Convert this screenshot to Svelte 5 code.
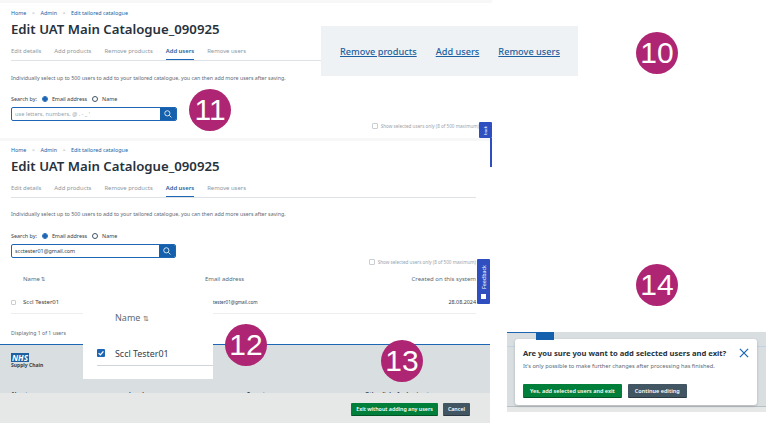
<script lang="ts">
	const tabs = ['Edit details', 'Add products', 'Remove products', 'Add users', 'Remove users'];
	const crumbs = ['Home', 'Admin', 'Edit tailored catalogue'];
	const badges = [
		{ n: 10, x: 657, y: 53 },
		{ n: 11, x: 210, y: 110 },
		{ n: 12, x: 246, y: 345 },
		{ n: 13, x: 402, y: 361 },
		{ n: 14, x: 657, y: 285 }
	];
</script>

{#snippet header()}
	<nav class="crumbs">
		{#each crumbs as c, i}
			{#if i > 0}<span class="sep">&gt;</span>{/if}
			<span>{c}</span>
		{/each}
	</nav>
	<h1>Edit UAT Main Catalogue_090925</h1>
	<div class="tabs">
		{#each tabs as t}
			<span class="tab" class:active={t === 'Add users'}>{t}</span>
		{/each}
	</div>
	<p class="intro">
		Individually select up to 500 users to add to your tailored catalogue, you can then add more users after saving.
	</p>
{/snippet}

{#snippet search(value, placeholder)}
	<div class="search-by">
		<span>Search by:</span>
		<span class="radio on"></span><span>Email address</span>
		<span class="radio"></span><span>Name</span>
	</div>
	<div class="search">
		<span class="field" class:placeholder>{value}</span>
		<span class="go">
			<svg width="8" height="8" viewBox="0 0 12 12" fill="none" stroke="#fff" stroke-width="1.2">
				<circle cx="5" cy="5" r="3.9" />
				<path d="M8 8l3.2 3.2" />
			</svg>
		</span>
	</div>
{/snippet}

{#snippet show()}
	<label class="show">
		<span class="box"></span>
		<span>Show selected users only (8 of 500 maximum)</span>
	</label>
{/snippet}

<main class="canvas">
	<section class="shot first">
		{@render header()}
		<div class="search-wrap">{@render search('use letters, numbers, @ . - _ \'', true)}</div>
		<div class="show-row">{@render show()}</div>
		<div class="feedback stub"><span>back</span></div>
	</section>

	<section class="shot second">
		{@render header()}
		<div class="search-wrap">{@render search('scctester01@gmail.com', false)}</div>
		<div class="show-row">{@render show()}</div>
		<div class="table">
			<div class="thead">
				<span class="c-name">Name <b>⇅</b></span>
				<span class="c-mail">Email address</span>
				<span class="c-date">Created on this system</span>
			</div>
			<div class="trow">
				<span class="box small"></span>
				<span class="c-name">Sccl Tester01</span>
				<span class="c-mail">tester01@gmail.com</span>
				<span class="c-date">28.08.2024</span>
			</div>
		</div>
		<p class="count">Displaying 1 of 1 users</p>
		<div class="feedback">
			<span>Feedback</span>
			<i></i>
		</div>
		<footer class="foot">
			<div class="logo">
				<span class="nhs">NHS</span>
				<span>Supply Chain</span>
			</div>
			<div class="links">
				<span>About</span><span>Legal</span><span>Export</span><span>Other links for buying teams</span>
			</div>
		</footer>
		<div class="actions">
			<button class="btn green">Exit without adding any users</button>
			<button class="btn slate">Cancel</button>
		</div>
	</section>

	<section class="tab-crop">
		<span>Remove products</span>
		<span>Add users</span>
		<span>Remove users</span>
	</section>

	<section class="row-crop">
		<div class="big-name">Name <b>⇅</b></div>
		<div class="big-row">
			<span class="checked">
				<svg width="8" height="8" viewBox="0 0 10 10" fill="none" stroke="#fff" stroke-width="1.6">
					<path d="M2 5.2l2.2 2.2L8 3" />
				</svg>
			</span>
			<span>Sccl Tester01</span>
		</div>
	</section>

	<section class="modal-crop">
		<div class="crop-top">
			<span class="crop-btn"></span>
		</div>
		<div class="modal">
			<div class="modal-head">
				<h2>Are you sure you want to add selected users and exit?</h2>
				<svg width="10" height="10" viewBox="0 0 11 11" stroke="#1d66b5" stroke-width="1.4">
					<path d="M1 1l9 9M10 1l-9 9" />
				</svg>
			</div>
			<p>It's only possible to make further changes after processing has finished.</p>
			<div class="modal-actions">
				<button class="btn green">Yes, add selected users and exit</button>
				<button class="btn slate">Continue editing</button>
			</div>
		</div>
	</section>

	{#each badges as b}
		<span class="badge" style="left: {b.x - 21}px; top: {b.y - 21}px">{b.n}</span>
	{/each}
</main>

<style>
	:global(body) {
		background: #fff;
	}
	.canvas {
		position: relative;
		width: 771px;
		height: 439px;
		overflow: hidden;
		font-family: 'Noto Sans', sans-serif;
		color: #425563;
	}
	.shot {
		position: absolute;
		left: 0;
		width: 492px;
		box-sizing: border-box;
		padding: 6px 0 0 11px;
	}
	.first {
		top: 3px;
		height: 135px;
		padding-top: 6px;
		box-shadow: 0 -3px 0 #f7f7f7;
	}
	.second {
		top: 141px;
		width: 490px;
		height: 282px;
		padding-top: 5px;
		box-shadow: 0 -3px 0 #f7f7f7;
	}
	.crumbs {
		display: flex;
		gap: 5px;
		height: 7px;
		margin-top: 1px;
		font-size: 5.4px;
		line-height: 7px;
		color: #1d5f9f;
	}
	.sep {
		margin: 0 0.5px;
		color: #98a4ae;
	}
	h1 {
		margin: 2px 0 0;
		font-size: 13.2px;
		line-height: 20px;
		font-weight: 600;
		color: #27323c;
	}
	.tabs {
		display: flex;
		gap: 13px;
		height: 21px;
		margin-top: 1px;
		width: 465px;
		border-bottom: 1px solid #dfe3e6;
		box-sizing: border-box;
	}
	.first .tabs {
		width: 310px;
	}
	.tab {
		font-size: 5.9px;
		line-height: 22px;
		color: #8d98a2;
	}
	.tab.active {
		height: 100%;
		box-sizing: border-box;
		color: #1d5f9f;
		font-weight: 600;
		border-bottom: 1px solid #1d66b5;
	}
	.intro {
		margin: 12px 0 0;
		font-size: 5.3px;
		line-height: 8px;
		white-space: nowrap;
		color: #5d6a75;
	}
	.first .intro {
		margin-top: 13px;
	}
	.search-wrap {
		margin-top: 13px;
	}
	.second .search-wrap {
		margin-top: 14px;
	}
	.search-by {
		display: flex;
		align-items: center;
		gap: 4px;
		height: 8px;
		font-size: 5.4px;
		color: #33404b;
	}
	.radio {
		width: 6px;
		height: 6px;
		border: 1px solid #425563;
		border-radius: 50%;
		box-sizing: border-box;
		margin-left: 1px;
	}
	.radio.on {
		border-color: #1d66b5;
		background: radial-gradient(circle, #1d66b5 0 2px, #fff 2.2px);
	}
	.search {
		display: flex;
		width: 166px;
		height: 14px;
		margin-top: 4px;
		box-sizing: border-box;
		border: 1px solid #1d66b5;
		border-radius: 2px;
		overflow: hidden;
	}
	.second .search {
		width: 165px;
	}
	.field {
		flex: 1;
		padding-left: 3px;
		font-size: 5.4px;
		line-height: 12px;
		color: #33404b;
	}
	.field.placeholder {
		font-size: 5.6px;
		color: #98a4ae;
	}
	.go {
		display: flex;
		align-items: center;
		justify-content: center;
		width: 16px;
		background: #1560ad;
	}
	.show-row {
		display: flex;
		justify-content: flex-end;
		width: 468px;
		margin-top: 2px;
	}
	.second .show-row {
		width: 465px;
		margin-top: 1px;
	}
	.show {
		display: flex;
		align-items: center;
		gap: 3px;
		font-size: 4.6px;
		color: #98a4ae;
		white-space: nowrap;
	}
	.box {
		width: 6px;
		height: 6px;
		border: 1px solid #c8ced3;
		border-radius: 1px;
		box-sizing: border-box;
	}
	.box.small {
		width: 5px;
		height: 5px;
	}
	.table {
		width: 465px;
		margin-top: 2px;
		font-size: 6px;
	}
	.thead,
	.trow {
		display: grid;
		grid-template-columns: 12px 182px 1fr auto;
		align-items: center;
	}
	.thead {
		height: 24px;
		color: #5d6a75;
	}
	.thead .c-name {
		grid-column: 2;
	}
	.thead .c-mail {
		grid-column: 3;
	}
	.c-date {
		grid-column: 4;
		text-align: right;
	}
	.thead b {
		font-weight: 400;
		font-size: 5px;
	}
	.trow {
		height: 22px;
		border-bottom: 1px solid #eceeef;
		color: #33404b;
		font-size: 6px;
	}
	.trow .c-mail {
		padding-left: 8px;
		font-size: 4.6px;
	}
	.trow .c-date {
		font-size: 5.4px;
	}
	.count {
		margin: 15px 0 0;
		font-size: 5.2px;
		line-height: 8px;
		color: #5d6a75;
	}
	.feedback {
		position: absolute;
		right: 0;
		top: 118px;
		width: 13px;
		height: 45px;
		display: flex;
		flex-direction: column;
		align-items: center;
		justify-content: center;
		gap: 5px;
		border-radius: 1px;
		background: #2f4fc0;
		color: #fff;
		font-size: 5.4px;
	}
	.feedback span {
		writing-mode: vertical-rl;
		transform: rotate(180deg);
	}
	.feedback i {
		width: 5px;
		height: 5px;
		background: #fff;
	}
	.stub {
		top: 119px;
		height: 16px;
	}
	.stub::after {
		content: '';
		position: absolute;
		right: 0;
		top: 16px;
		width: 2px;
		height: 29px;
		background: #2f4fc0;
	}
	.stub span {
		font-size: 4px;
	}
	.foot {
		position: absolute;
		left: 0;
		right: 0;
		top: 203px;
		height: 49px;
		box-sizing: border-box;
		padding: 8px 11px 0;
		border-top: 1px solid #1d66b5;
		background: #d9dee0;
		overflow: hidden;
	}
	.logo {
		display: flex;
		flex-direction: column;
		align-items: flex-start;
		font-size: 5px;
		font-weight: 700;
		line-height: 7px;
		color: #33404b;
	}
	.nhs {
		padding: 0 1px;
		font-size: 8px;
		font-weight: 700;
		font-style: italic;
		line-height: 9px;
		background: #1d5f9f;
		color: #fff;
	}
	.links {
		display: grid;
		grid-template-columns: 118px 118px 118px 1fr;
		margin-top: 21px;
		font-size: 5.5px;
		font-weight: 700;
		color: #33404b;
	}
	.actions {
		position: absolute;
		left: 0;
		right: 0;
		top: 252px;
		height: 30px;
		box-sizing: border-box;
		padding: 10px 20px 0 0;
		display: flex;
		justify-content: flex-end;
		gap: 5px;
		background: #e6e7e7;
	}
	.btn {
		height: 13px;
		padding: 0 5px;
		border: 0;
		border-bottom: 1px solid #00000055;
		border-radius: 1px;
		color: #fff;
		font: 600 5.3px 'Noto Sans', sans-serif;
		white-space: nowrap;
	}
	.green {
		background: #007f3b;
	}
	.slate {
		background: #425563;
	}
	.tab-crop {
		position: absolute;
		left: 321px;
		top: 26px;
		width: 257px;
		height: 50px;
		box-sizing: border-box;
		padding-left: 19px;
		display: flex;
		align-items: center;
		gap: 19px;
		background: #eef2f4;
		font-size: 9.2px;
		font-weight: 500;
		color: #1d5f9f;
		text-decoration: underline;
	}
	.row-crop {
		position: absolute;
		left: 83px;
		top: 311px;
		width: 130px;
		height: 68px;
		box-sizing: border-box;
		padding-left: 14px;
		background: #fff;
	}
	.big-name {
		padding-left: 18px;
		height: 14px;
		line-height: 14px;
		font-size: 9px;
		color: #5d6a75;
	}
	.big-name b {
		font-weight: 400;
		font-size: 7px;
	}
	.big-row {
		display: flex;
		align-items: center;
		gap: 10px;
		height: 41px;
		box-sizing: border-box;
		padding-top: 16px;
		border-bottom: 1px solid #cfd5d9;
		font-size: 8.9px;
		color: #33404b;
	}
	.checked {
		display: flex;
		align-items: center;
		justify-content: center;
		width: 8px;
		height: 8px;
		border-radius: 1px;
		background: #1d66b5;
	}
	.modal-crop {
		position: absolute;
		left: 507px;
		top: 332px;
		width: 259px;
		height: 80px;
		box-sizing: border-box;
		padding: 0 9px 0 8px;
		background:
			linear-gradient(transparent 14px, #c3d3e3 14px 15px, transparent 15px),
			linear-gradient(#d9dee0 0 74px, #b9c0c5 74px 75px, #e6e7e7 75px);
	}
	.crop-top {
		position: relative;
		width: 29px;
		height: 7px;
		margin-left: -8px;
		box-sizing: border-box;
		border-top: 1px solid #1d66b5;
	}
	.crop-btn {
		position: absolute;
		left: 29px;
		top: -1px;
		width: 18px;
		height: 8px;
		background: #1560ad;
	}
	.modal {
		height: 66px;
		box-sizing: border-box;
		padding: 8px 8px 0;
		border-radius: 3px;
		background: #fff;
		box-shadow: 0 1px 3px #0003;
	}
	.modal-head {
		display: flex;
		justify-content: space-between;
		align-items: center;
	}
	h2 {
		margin: 0;
		font-size: 7.6px;
		font-weight: 700;
		line-height: 12px;
		color: #27323c;
	}
	.modal p {
		margin: 3px 0 0;
		font-size: 5.7px;
		line-height: 8px;
		color: #5d6a75;
	}
	.modal-actions {
		display: flex;
		gap: 6px;
		margin-top: 14px;
	}
	.modal-actions .btn {
		height: 14px;
		padding: 0 7px;
		font-size: 5.5px;
	}
	.badge {
		position: absolute;
		width: 42px;
		height: 42px;
		border-radius: 50%;
		background: #ae2573;
		color: #fff;
		font: 400 30px/42px 'Liberation Sans', sans-serif;
		text-align: center;
	}
</style>
